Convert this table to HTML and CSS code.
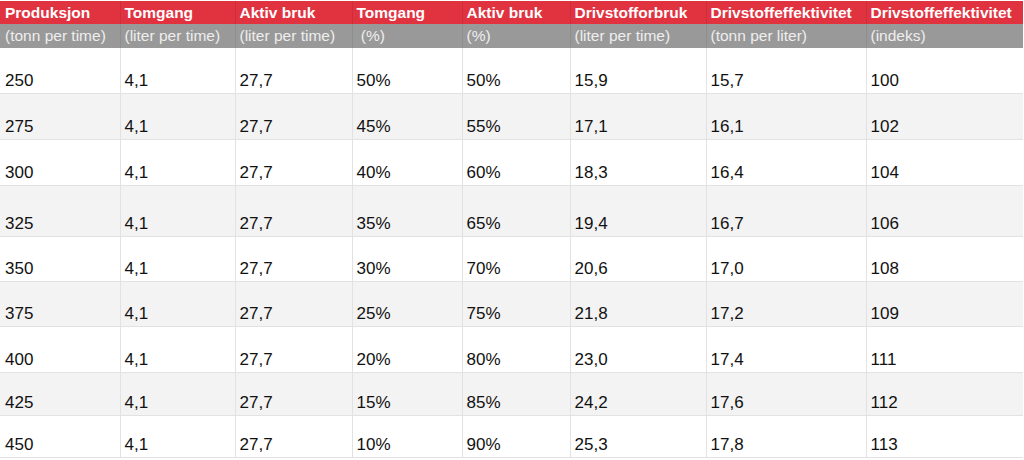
FILE: index.html
```html
<!DOCTYPE html>
<html lang="no">
<head>
<meta charset="utf-8">
<title>Drivstoffeffektivitet</title>
<link rel="stylesheet" href="styles.css">
</head>
<body>
<table class="fuel">
  <colgroup>
    <col class="c1"><col class="c2"><col class="c3"><col class="c4">
    <col class="c5"><col class="c6"><col class="c7"><col class="c8">
  </colgroup>
  <thead>
    <tr class="head">
      <th>Produksjon</th><th>Tomgang</th><th>Aktiv bruk</th><th>Tomgang</th>
      <th>Aktiv bruk</th><th>Drivstofforbruk</th><th>Drivstoffeffektivitet</th><th>Drivstoffeffektivitet</th>
    </tr>
    <tr class="sub">
      <th>(tonn per time)</th><th>(liter per time)</th><th>(liter per time)</th><th>&nbsp;(%)</th>
      <th>(%)</th><th>(liter per time)</th><th>(tonn per liter)</th><th>(indeks)</th>
    </tr>
  </thead>
  <tbody>
    <tr class="h46"><td>250</td><td>4,1</td><td>27,7</td><td>50%</td><td>50%</td><td>15,9</td><td>15,7</td><td>100</td></tr>
    <tr class="h46 alt"><td>275</td><td>4,1</td><td>27,7</td><td>45%</td><td>55%</td><td>17,1</td><td>16,1</td><td>102</td></tr>
    <tr class="h46"><td>300</td><td>4,1</td><td>27,7</td><td>40%</td><td>60%</td><td>18,3</td><td>16,4</td><td>104</td></tr>
    <tr class="h51 alt"><td>325</td><td>4,1</td><td>27,7</td><td>35%</td><td>65%</td><td>19,4</td><td>16,7</td><td>106</td></tr>
    <tr class="h45"><td>350</td><td>4,1</td><td>27,7</td><td>30%</td><td>70%</td><td>20,6</td><td>17,0</td><td>108</td></tr>
    <tr class="h45 alt"><td>375</td><td>4,1</td><td>27,7</td><td>25%</td><td>75%</td><td>21,8</td><td>17,2</td><td>109</td></tr>
    <tr class="h46"><td>400</td><td>4,1</td><td>27,7</td><td>20%</td><td>80%</td><td>23,0</td><td>17,4</td><td>111</td></tr>
    <tr class="h43 alt"><td>425</td><td>4,1</td><td>27,7</td><td>15%</td><td>85%</td><td>24,2</td><td>17,6</td><td>112</td></tr>
    <tr class="h42"><td>450</td><td>4,1</td><td>27,7</td><td>10%</td><td>90%</td><td>25,3</td><td>17,8</td><td>113</td></tr>
  </tbody>
</table>
</body>
</html>
```

FILE: styles.css
```css
html, body {
  margin: 0;
  padding: 0;
  background: #ffffff;
}

body {
  font-family: "Liberation Sans", Arial, Helvetica, sans-serif;
  color: #111111;
}

.fuel {
  width: 1023px;
  table-layout: fixed;
  border-collapse: collapse;
  border-spacing: 0;
  margin-top: 1px;
}

.c1 { width: 120px; }
.c2 { width: 115px; }
.c3 { width: 117px; }
.c4 { width: 110px; }
.c5 { width: 108px; }
.c6 { width: 136px; }
.c7 { width: 160px; }
.c8 { width: 157px; }

.fuel th,
.fuel td {
  text-align: left;
  padding: 0 0 0 4px;
  white-space: nowrap;
  overflow: hidden;
}

.fuel th:first-child,
.fuel td:first-child {
  padding-left: 5px;
}

.head th {
  height: 23px;
  background: #e1323f;
  color: #ffffff;
  font-weight: bold;
  font-size: 15.5px;
  vertical-align: middle;
  border-right: 1px solid #c9303b;
}

.sub th {
  height: 24px;
  background: #999999;
  color: #eeeeee;
  font-weight: normal;
  font-size: 15.5px;
  vertical-align: middle;
  border-right: 1px solid #8e8e8e;
}

.fuel td {
  font-size: 17px;
  vertical-align: bottom;
  padding-bottom: 2px;
  border-right: 1px solid #e2e2e2;
  border-bottom: 1px solid #e2e2e2;
  background: #ffffff;
}

.fuel tr.alt td {
  background: #f3f3f3;
}

.fuel th:last-child,
.fuel td:last-child {
  border-right: none;
}

.h42 td { height: 39px; }
.h43 td { height: 40px; }
.h45 td { height: 42px; }
.h46 td { height: 43px; }
.h51 td { height: 48px; }
```
